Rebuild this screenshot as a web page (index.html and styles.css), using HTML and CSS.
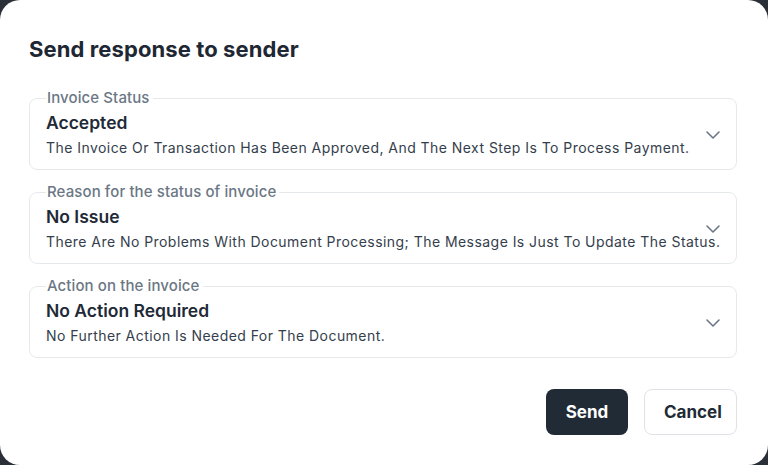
FILE: index.html
```html
<!DOCTYPE html>
<html>
<head>
    <title>Send response to sender</title>
    <link rel="stylesheet" href="styles.css">
</head>
<body>
    <div class="dialog">
        <h1 class="dialog-title">Send response to sender</h1>
        <form class="response-form">
            <fieldset class="select-field">
                <legend>Invoice Status</legend>
                <div class="select-body">
                    <div class="select-text">
                        <div class="select-value">Accepted</div>
                        <div class="select-desc">The Invoice Or Transaction Has Been Approved, And The Next Step Is To Process Payment.</div>
                    </div>
                    <svg class="chevron" width="16" height="10" viewBox="0 0 16 10"><path d="M2 2l6 6 6-6" fill="none" stroke="currentColor" stroke-width="1.6" stroke-linecap="round" stroke-linejoin="round"/></svg>
                </div>
            </fieldset>
            <fieldset class="select-field">
                <legend>Reason for the status of invoice</legend>
                <div class="select-body">
                    <div class="select-text">
                        <div class="select-value">No Issue</div>
                        <div class="select-desc">There Are No Problems With Document Processing; The Message Is Just To Update The Status.</div>
                    </div>
                    <svg class="chevron" width="16" height="10" viewBox="0 0 16 10"><path d="M2 2l6 6 6-6" fill="none" stroke="currentColor" stroke-width="1.6" stroke-linecap="round" stroke-linejoin="round"/></svg>
                </div>
            </fieldset>
            <fieldset class="select-field">
                <legend>Action on the invoice</legend>
                <div class="select-body">
                    <div class="select-text">
                        <div class="select-value">No Action Required</div>
                        <div class="select-desc">No Further Action Is Needed For The Document.</div>
                    </div>
                    <svg class="chevron" width="16" height="10" viewBox="0 0 16 10"><path d="M2 2l6 6 6-6" fill="none" stroke="currentColor" stroke-width="1.6" stroke-linecap="round" stroke-linejoin="round"/></svg>
                </div>
            </fieldset>
            <div class="actions">
                <button type="button" class="btn btn-primary">Send</button>
                <button type="button" class="btn btn-outline">Cancel</button>
            </div>
        </form>
    </div>
</body>
</html>
```

FILE: styles.css
```css
html, body {
    margin: 0;
    height: 100%;
}
body {
    background: #2b3038;
    font-family: Inter, "Noto Sans", sans-serif;
    color: #1f2a37;
}
.dialog {
    height: 465px;
    box-sizing: border-box;
    background: #fff;
    border-radius: 20px;
    padding: 34px 31px 0 29px;
}
.dialog-title {
    margin: 0 0 25px;
    font-size: 22px;
    line-height: 30px;
    font-weight: 700;
    color: #1e2733;
    letter-spacing: 0.1px;
}
.response-form {
    display: flex;
    flex-direction: column;
    gap: 13px;
}
.select-field {
    margin: 0;
    border: 1px solid #e6e9ec;
    border-radius: 8px;
    padding: 0 15px 11px 16px;
    min-width: 0;
}
.select-field legend {
    padding: 0 3px 0 1px;
    font-size: 15px;
    line-height: 18px;
    font-weight: 500;
    color: #6b7785;
    letter-spacing: 0.1px;
}
.select-body {
    display: flex;
    align-items: center;
}
.select-text {
    flex: 1;
    min-width: 0;
}
.select-value {
    font-size: 17.5px;
    line-height: 26px;
    font-weight: 600;
    color: #1f2a37;
    margin-top: 3px;
}
.select-desc {
    font-size: 14px;
    line-height: 20px;
    color: #343e4c;
    margin-top: 2px;
    letter-spacing: 0.45px;
    white-space: nowrap;
}
.chevron {
    color: #6b7785;
    flex: none;
    margin-left: 8px;
    margin-top: 4px;
}
.actions {
    display: flex;
    justify-content: flex-end;
    gap: 16px;
    margin-top: 18px;
}
.btn {
    height: 46px;
    padding: 0 19px;
    border-radius: 8px;
    font-family: inherit;
    font-size: 17px;
    font-weight: 700;
    cursor: pointer;
}
.btn-primary {
    background: #212b36;
    color: #fff;
    border: none;
    width: 82px;
}
.btn-outline {
    background: #fff;
    color: #212b36;
    border: 1px solid #dfe3e8;
    width: 93px;
}
```
